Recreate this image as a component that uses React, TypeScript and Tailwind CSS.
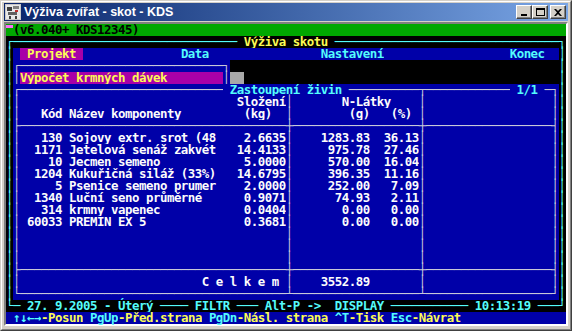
import React from 'react';

type Seg = [string, string];

const h = (n: number) => '─'.repeat(n);
const sp = (n: number) => ' '.repeat(n);

// text-mode colours
const OL = 'text-[#54fcfc]';
const BL = 'text-[#c8c8d8] bg-[#0000a8]';
const BW = 'text-[#fcfcfc] bg-[#0000a8]';
const BC = 'text-[#54fcfc] bg-[#0000a8]';
const BY = 'text-[#fcfc54] bg-[#0000a8]';
const MY = 'text-[#fcfc54] bg-[#a800a8]';

const items = [
  ['130', 'Sojovy extr. srot (48', '2.6635', '1283.83', '36.13'],
  ['1171', 'Jetelová senáž zakvét', '14.4133', '975.78', '27.46'],
  ['10', 'Jecmen semeno', '5.0000', '570.00', '16.04'],
  ['1204', 'Kukuřičná siláž (33%)', '14.6795', '396.35', '11.16'],
  ['5', 'Psenice semeno prumer', '2.0000', '252.00', '7.09'],
  ['1340', 'Luční seno průměrné', '0.9071', '74.93', '2.11'],
  ['314', 'krmny vapenec', '0.0404', '0.00', '0.00'],
  ['60033', 'PREMIN EX 5', '0.3681', '0.00', '0.00'],
];

const tableRow = (a: string, b: string): Seg[] => [
  ['│', OL],
  ['│', BL],
  [a, BW],
  ['│', BL],
  [b, BW],
  ['│', BL],
  [sp(18), BW],
  ['│', BL],
  ['│', OL],
];

const sepRow: Seg[] = [
  ['│', OL],
  ['├' + h(38) + '┼' + h(18) + '┼' + h(18) + '┤', BL],
  ['│', OL],
];

const rows: Seg[][] = [
  [
    ['┌' + h(32), OL],
    [' Výživa skotu ', 'text-[#fcfc54]'],
    [h(32) + '┐', OL],
  ],
  [
    ['│', OL],
    [' ', BW],
    [' Projekt ', MY],
    [sp(14), BW],
    ['Data', BC],
    [sp(16), BW],
    ['Nastavení', BC],
    [sp(18), BW],
    ['Konec', BC],
    [sp(2), BW],
    ['│', OL],
  ],
  [
    ['│', OL],
    ['┌' + h(29) + '┐', BL],
    [sp(47), ''],
    ['│', OL],
  ],
  [
    ['│', OL],
    ['│', BL],
    ['Výpočet krmných dávek' + sp(8), MY],
    ['│', BL],
    ['  ', 'bg-[#a8a8a8]'],
    [sp(45), ''],
    ['│', OL],
  ],
  [
    ['│', OL],
    ['┌' + h(29), BL],
    [' Zastoupení živin ', BC],
    [h(10) + '┬' + h(12), BL],
    [' 1/1 ', BC],
    ['─┐', BL],
    ['│', OL],
  ],
  tableRow(sp(31) + 'Složení', sp(7) + 'N-Látky' + sp(4)),
  tableRow(sp(3) + 'Kód Název komponenty' + sp(9) + '(kg)' + sp(2), sp(8) + '(g)' + sp(3) + '(%)' + ' '),
  sepRow,
  ...items.map(([code, name, kg, g, pct]) =>
    tableRow(code.padStart(6) + ' ' + name.padEnd(22) + kg.padStart(9), g.padStart(11) + pct.padStart(7))
  ),
  tableRow(sp(38), sp(18)),
  tableRow(sp(38), sp(18)),
  tableRow(sp(38), sp(18)),
  sepRow,
  tableRow(sp(26) + 'C e l k e m' + ' ', '3552.89'.padStart(11) + sp(7)),
  [
    ['│', OL],
    ['└' + h(38) + '┴' + h(18) + '┴' + h(18) + '┘', BL],
    ['│', OL],
  ],
  [
    ['└─', OL],
    [' 27. 9.2005 - Úterý ', OL],
    [h(4), OL],
    [' FILTR ', OL],
    [h(3), OL],
    [' Alt-P ->  DISPLAY ', OL],
    [h(11), OL],
    [' 10:13:19 ', OL],
    [h(3) + '┘', OL],
  ],
  [
    [' ', BW],
    ['↑↓←→', BC],
    ['-Posun', BY],
    [' ', BW],
    ['PgUp', BC],
    ['-Před.strana', BY],
    [' ', BW],
    ['PgDn', BC],
    ['-Násl. strana', BY],
    [' ', BW],
    ['^T', BC],
    ['-Tisk', BY],
    [' ', BW],
    ['Esc', BC],
    ['-Návrat', BY],
    [sp(15), BW],
  ],
];

const Line = ({ segs }: { segs: Seg[] }) => (
  <div className="flex h-[12px]">
    {segs.map(([t, c], i) => (
      <span key={i} className={`h-[12px] shrink-0 ${c}`}>
        {t}
      </span>
    ))}
  </div>
);

const TitleButton = ({ children, className = '' }: { children: React.ReactNode; className?: string }) => (
  <div
    className={`w-[16px] h-[14px] bg-[#d4d0c8] border-t border-l border-white border-r border-b border-r-[#404040] border-b-[#404040] flex items-center justify-center shadow-[inset_-1px_-1px_0_#808080] ${className}`}
  >
    {children}
  </div>
);

const AppIcon = () => (
  <svg width="16" height="16" viewBox="0 0 16 16" className="shrink-0">
    <rect x="0" y="0" width="16" height="16" fill="#c8c8c8" />
    <rect x="1" y="1" width="14" height="14" fill="#e8e8e8" />
    <rect x="2" y="3" width="5" height="4" fill="#404040" />
    <rect x="8" y="2" width="6" height="3" fill="#808080" />
    <rect x="3" y="8" width="9" height="3" fill="#606060" />
    <rect x="10" y="6" width="3" height="2" fill="#c03030" />
    <rect x="4" y="12" width="2" height="3" fill="#404040" />
    <rect x="10" y="12" width="2" height="3" fill="#404040" />
  </svg>
);

export default function App() {
  return (
    <div className="w-[572px] h-[331px] bg-[#d4d0c8] border border-t-[#d4d0c8] border-l-[#d4d0c8] border-r-[#404040] border-b-[#404040] overflow-hidden">
      <div className="h-full border border-t-white border-l-white border-r-[#808080] border-b-[#808080] px-[2px] pt-[1px] flex flex-col">
        <div className="h-[18px] flex items-center bg-gradient-to-r from-[#0a246a] to-[#7aa6e6] pl-[1px] pr-[2px]">
          <AppIcon />
          <span className="ml-[3px] text-white font-bold text-[12.5px] font-['Liberation_Sans',Arial,sans-serif] leading-none">
            Výživa zvířat - skot - KDS
          </span>
          <div className="flex-1" />
          <TitleButton>
            <div className="w-[6px] h-[2px] bg-black mt-[6px] mr-[1px]" />
          </TitleButton>
          <TitleButton>
            <div className="w-[9px] h-[8px] border border-black border-t-2" />
          </TitleButton>
          <TitleButton className="ml-[2px]">
            <svg width="8" height="7" viewBox="0 0 8 7">
              <path d="M0 0h2l2 2 2-2h2L5 3.5 8 7H6L4 5 2 7H0l3-3.5z" fill="black" />
            </svg>
          </TitleButton>
        </div>
        <div className="mt-[1px] border-2 border-t-[#808080] border-l-[#808080] border-r-white border-b-white bg-black">
          <div className="w-[560px] font-['DejaVu_Sans_Mono',monospace] font-bold text-[12.4px] tracking-[-0.4654px] leading-[12px] whitespace-pre bg-black">
            <div className="flex h-[12px] bg-[#00a800] text-black">
              <span className="w-[7px] h-[12px] shrink-0 pt-[1px]">
                <span className="block h-[3px] bg-[#fc6cfc]" />
              </span>
              <span className="h-[12px]">{'(v6.040+ KDS12345)'}</span>
            </div>
            {rows.map((segs, i) => (
              <Line key={i} segs={segs} />
            ))}
          </div>
        </div>
      </div>
    </div>
  );
}
